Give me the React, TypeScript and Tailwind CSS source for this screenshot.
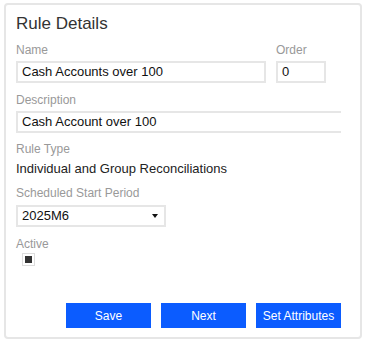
import React from 'react';

const labelCls = 'block text-[12px] leading-[14px] text-[#999999]';
const boxCls = 'h-[22px] border-2 border-[#e6e6e6] bg-white px-[4px] text-[13px] leading-[18px] text-[#111111]';

const RuleDetails: React.FC = () => {
  const buttons = ['Save', 'Next', 'Set Attributes'];

  return (
    <div className="ml-[4px] mt-[3px] flex h-[336px] w-[358px] flex-col rounded-[4px] border-2 border-[#e6e6e6] bg-white pl-[10px] pr-[19px] pt-[9px] pb-[9px]">
      <h2 className="text-[17px] leading-[20px] text-[#333333]">Rule Details</h2>

      <div className="mt-[9px] flex gap-[10px]">
        <div className="w-[250px]">
          <span className={labelCls}>Name</span>
          <div className={`mt-[4px] ${boxCls}`}>Cash Accounts over 100</div>
        </div>
        <div className="w-[50px]">
          <span className={labelCls}>Order</span>
          <div className={`mt-[4px] ${boxCls}`}>0</div>
        </div>
      </div>

      <span className={`mt-[10px] ${labelCls}`}>Description</span>
      <div className="mt-[4px] overflow-hidden">
        <div className={`${boxCls} w-[360px]`}>Cash Account over 100</div>
      </div>

      <span className={`mt-[9px] ${labelCls}`}>Rule Type</span>
      <p className="mt-[5px] text-[13px] leading-[16px] text-[#222222]">
        Individual and Group Reconciliations
      </p>

      <span className={`mt-[9px] ${labelCls}`}>Scheduled Start Period</span>
      <div className={`mt-[5px] flex w-[150px] items-center justify-between ${boxCls}`}>
        <span>2025M6</span>
        <svg width="6" height="4" viewBox="0 0 6 4" className="mr-[2px]">
          <path d="M0 0h6L3 4z" fill="#111111" />
        </svg>
      </div>

      <span className={`mt-[10px] ${labelCls}`}>Active</span>
      <div className="ml-[6px] mt-[2px] flex h-[13px] w-[13px] items-center justify-center border border-[#dddddd]">
        <div className="h-[7px] w-[7px] bg-[#333333]" />
      </div>

      <div className="mt-auto flex justify-end gap-[10px]">
        {buttons.map(b => (
          <button
            key={b}
            className="h-[25px] w-[85px] bg-[#0b5cff] text-[12px] text-white"
          >
            {b}
          </button>
        ))}
      </div>
    </div>
  );
};

export default function App() {
  return (
    <div className="h-[342px] w-[366px] bg-white" style={{ fontFamily: '"Liberation Sans", Arial, sans-serif' }}>
      <RuleDetails />
    </div>
  );
}
